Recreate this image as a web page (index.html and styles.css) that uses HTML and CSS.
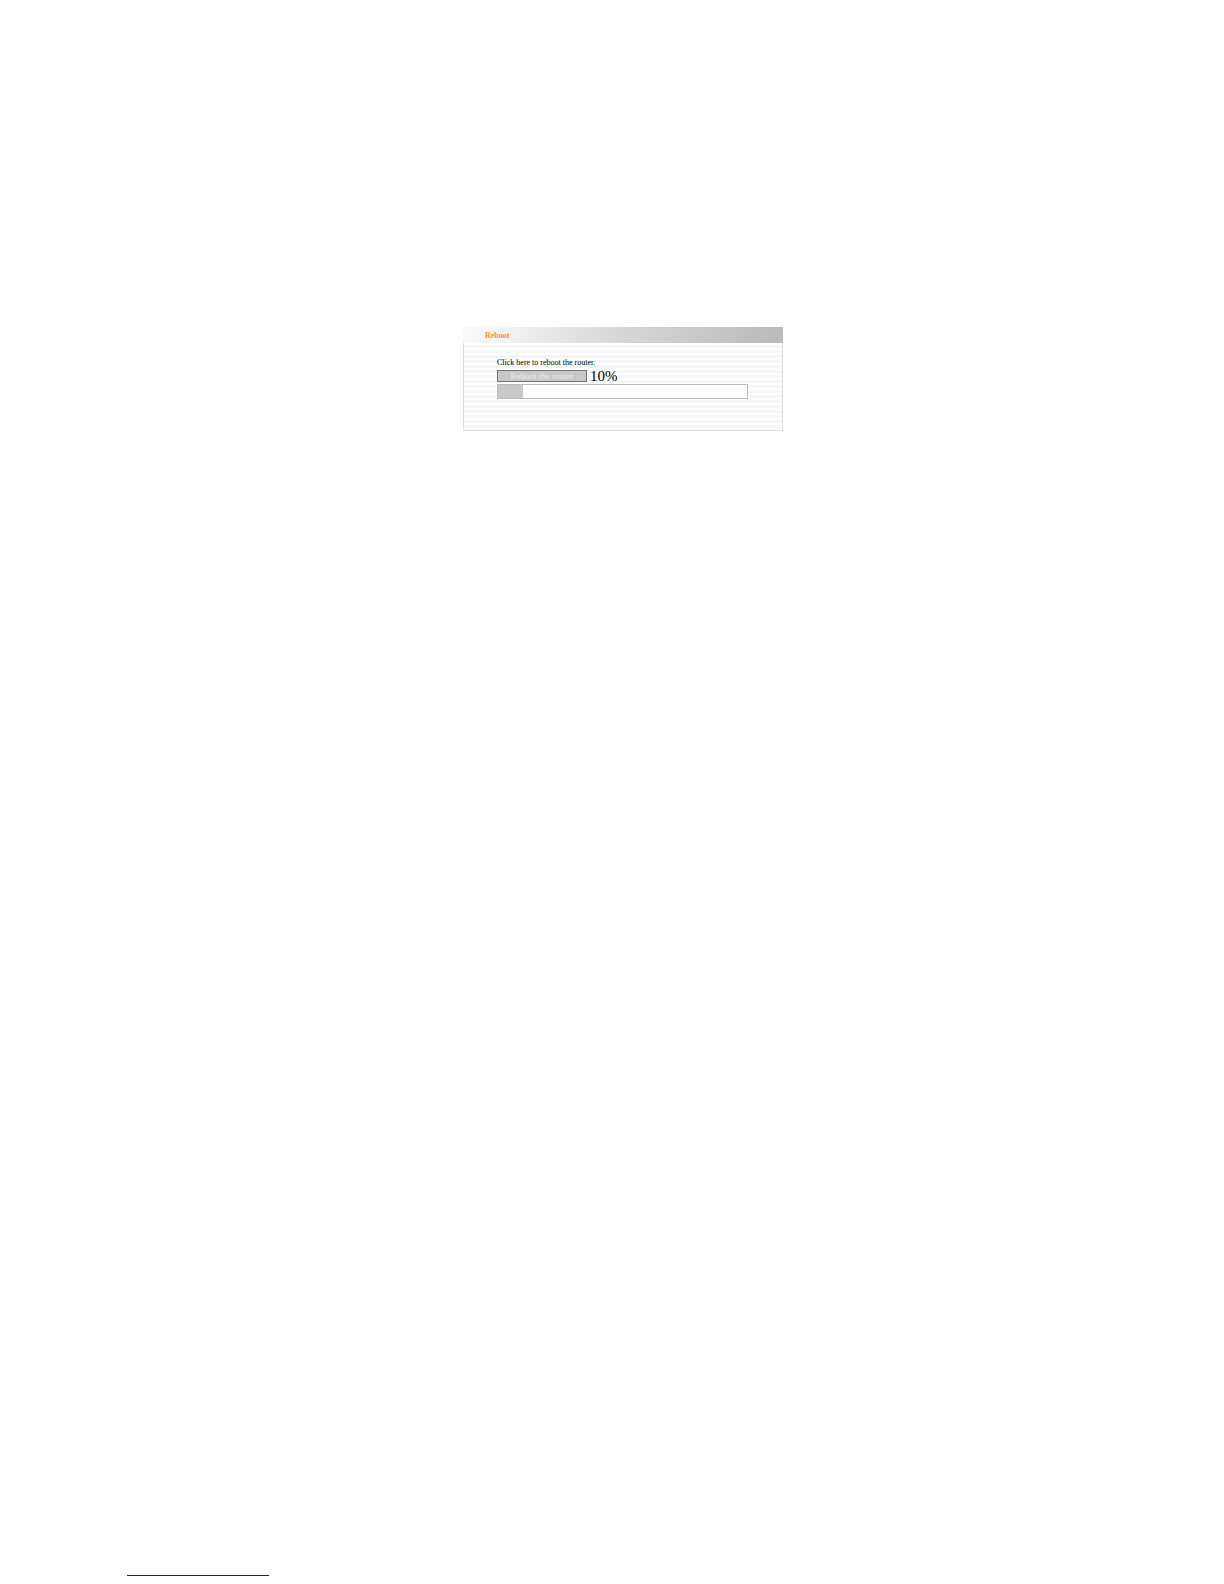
FILE: index.html
```
<!DOCTYPE html>
<html lang="en">
<head>
	<meta charset="UTF-8">
	<title>Reboot</title>
	<link rel="stylesheet" href="styles.css">
</head>
<body>
	<div id="main">
		<div class="panel">
			<h1 class="title">Reboot</h1>
			<div class="content">
				<p class="tip">Click here to reboot the router.</p>
				<div class="action">
					<button type="button" class="btn" disabled>Reboot the router</button>
					<span class="percent">10%</span>
				</div>
				<div class="bar">
					<div class="bar_fill" style="width: 10%"></div>
				</div>
			</div>
		</div>
	</div>
	<div id="foot">
		<div class="line"></div>
	</div>
</body>
</html>
```

FILE: styles.css
```
* {
	margin: 0;
	padding: 0;
	box-sizing: border-box;
}
body {
	display: flex;
	flex-direction: column;
	justify-content: space-between;
	min-height: 100vh;
	font-family: "Liberation Serif", serif;
	font-size: 8px;
	color: #000;
	background-color: #fff;
}
#main {
	padding: 327px 0 0 22px;
}
.panel {
	width: 320px;
	max-width: 100%;
	margin: 0 auto;
}
.title {
	height: 16px;
	padding-left: 22px;
	font-size: 8px;
	line-height: 17px;
	color: #ff8c1a;
	background: linear-gradient(to right, #fafafa, #f0f0f0 16%, #d6d6d6 50%, #bababa);
}
.content {
	padding: 14px 34px 31px 33px;
	border: 1px solid #dcdcdc;
	border-top: 0;
	background: repeating-linear-gradient(#fff 0, #fff 2px, #f6f6f6 2px, #f6f6f6 5px);
}
.tip {
	line-height: 12px;
}
.action {
	display: flex;
	align-items: center;
	height: 14px;
	gap: 3px;
}
.btn {
	width: 90px;
	height: 12px;
	border: 1px solid #777;
	font-family: inherit;
	font-size: 9px;
	line-height: 10px;
	color: #eee;
	background-color: #c8c8c8;
}
.percent {
	font-size: 15px;
	line-height: 14px;
}
.bar {
	height: 15px;
	margin-top: 1px;
	border: 1px solid #bbb;
	background-color: #fff;
}
.bar_fill {
	height: 100%;
	background-color: #c8c8c8;
}
#foot {
	padding: 0 127px 8px;
}
.line {
	width: 142px;
	border-top: 1px solid #1414a8;
}
```
